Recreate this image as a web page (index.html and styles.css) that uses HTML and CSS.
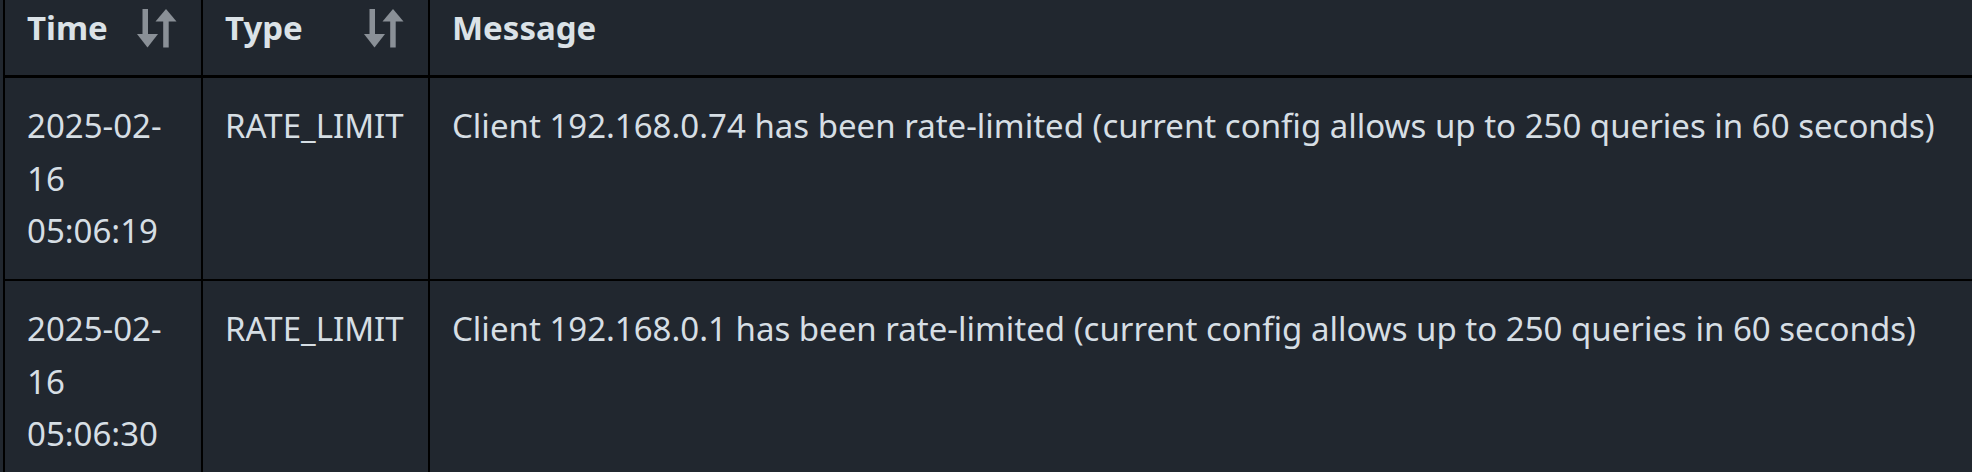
FILE: index.html
```html
<!DOCTYPE html>
<html>
<head>
<meta charset="utf-8">
<link rel="stylesheet" href="styles.css">
</head>
<body>
<table class="log">
  <thead>
    <tr>
      <th class="col-time"><div class="th-inner"><span>Time</span><svg class="sort" viewBox="0 0 40 40" width="40" height="40"><rect x="5.5" y="0" width="5.5" height="26"/><polygon points="0,25 21,25 10.5,38.5" stroke-linejoin="round"/><polygon points="18.5,12.5 39.5,12.5 29,0" stroke-linejoin="round"/><rect x="26.2" y="12" width="5.5" height="26.5"/></svg></div></th>
      <th class="col-type"><div class="th-inner"><span>Type</span><svg class="sort" viewBox="0 0 40 40" width="40" height="40"><rect x="5.5" y="0" width="5.5" height="26"/><polygon points="0,25 21,25 10.5,38.5" stroke-linejoin="round"/><polygon points="18.5,12.5 39.5,12.5 29,0" stroke-linejoin="round"/><rect x="26.2" y="12" width="5.5" height="26.5"/></svg></div></th>
      <th class="col-msg"><div class="th-inner"><span>Message</span></div></th>
    </tr>
  </thead>
  <tbody>
    <tr>
      <td>2025-02-16 05:06:19</td>
      <td>RATE_LIMIT</td>
      <td>Client 192.168.0.74 has been rate-limited (current config allows up to 250 queries in 60 seconds)</td>
    </tr>
    <tr>
      <td>2025-02-16 05:06:30</td>
      <td>RATE_LIMIT</td>
      <td>Client 192.168.0.1 has been rate-limited (current config allows up to 250 queries in 60 seconds)</td>
    </tr>
  </tbody>
</table>
</body>
</html>
```
FILE: styles.css
```css
html, body {
  margin: 0;
  padding: 0;
  background: #21272f;
}
body {
  font-family: "Noto Sans", "Open Sans", sans-serif;
  font-size: 33px;
  line-height: 52.5px;
  color: #d6dee4;
  overflow: hidden;
}
.log {
  margin-left: 3px;
  width: calc(100% - 3px);
  border-collapse: separate;
  border-spacing: 0;
  table-layout: fixed;
  background: #21272f;
}
.log th,
.log td {
  box-sizing: border-box;
  border-left: 2px solid #000;
  padding: 22px 22px 21.5px;
  text-align: left;
  vertical-align: top;
}
.log th {
  padding-top: 2px;
  padding-bottom: 20.5px;
  border-bottom: 3px solid #000;
  font-weight: 700;
  color: #dbe2e7;
}
.log tbody tr + tr td {
  border-top: 2px solid #000;
}
.col-time { width: 198px; }
.col-type { width: 227px; }
.th-inner {
  display: flex;
  justify-content: space-between;
  align-items: flex-start;
}
.sort {
  display: block;
  margin-top: 7px;
  margin-right: 2px;
  fill: #8a9097;
  flex: none;
}
```
